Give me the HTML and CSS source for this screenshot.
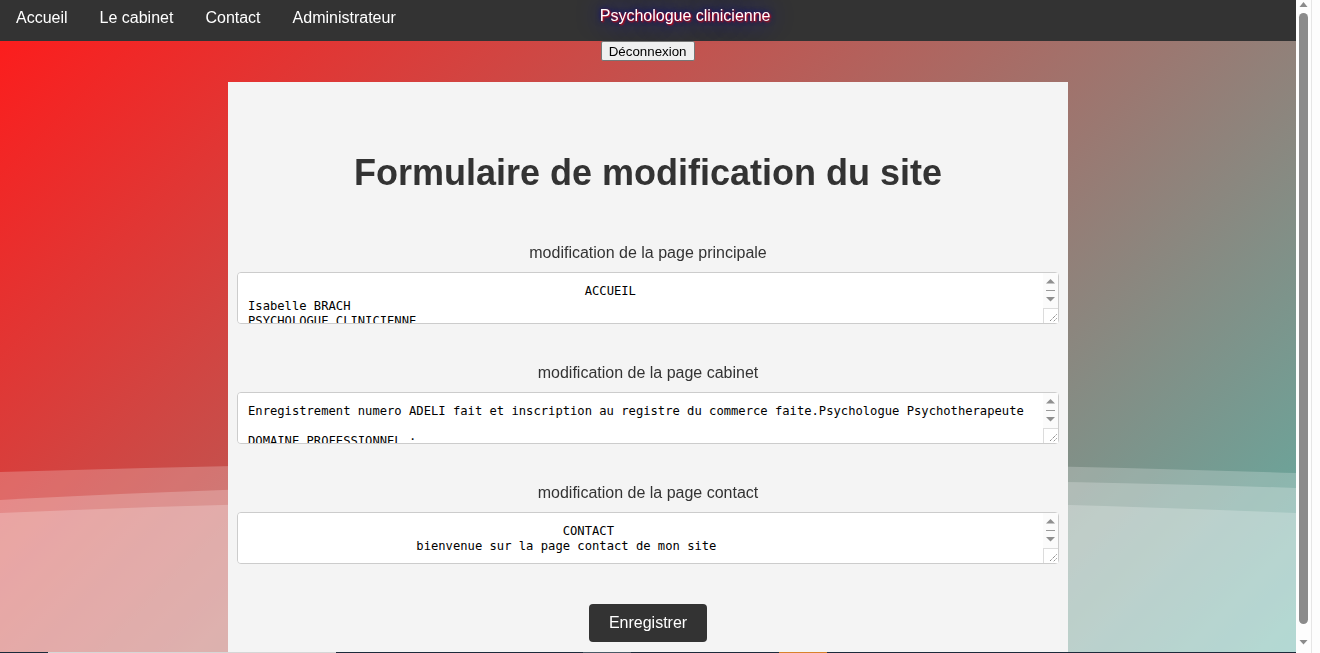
FILE: index.html
```html
<!DOCTYPE html>
<html lang="fr">
<head>
<meta charset="utf-8">
<title>Formulaire de modification du site</title>
<link rel="stylesheet" href="styles.css">
</head>
<body>
<div class="backdrop">
  <svg class="waves" viewBox="0 0 1296 653" preserveAspectRatio="none">
    <path d="M0,472 Q648,451 1296,473 L1296,653 L0,653 Z"/>
    <path d="M0,500 C400,478 900,474 1296,488 L1296,653 L0,653 Z"/>
    <path d="M0,513 Q648,485 1296,513 L1296,653 L0,653 Z"/>
  </svg>
</div>
<header class="topnav">
  <nav class="links">
    <a href="#">Accueil</a>
    <a href="#">Le cabinet</a>
    <a href="#">Contact</a>
    <a href="#">Administrateur</a>
  </nav>
  <div class="brand">
    <span class="brand-title">Psychologue clinicienne</span>
    <button class="logout" type="button">Déconnexion</button>
  </div>
</header>
<main class="card">
  <h1 class="title">Formulaire de modification du site</h1>
  <form class="edit-form">
    <div class="field">
      <label class="field-label">modification de la page principale</label>
      <div class="input-wrap">
        <textarea class="field-input">                                              ACCUEIL
Isabelle BRACH
PSYCHOLOGUE CLINICIENNE
PSYCHOTHERAPEUTE

Consultations sur rendez-vous
Adultes, adolescents, enfants</textarea>
        <svg class="ta-scroll" width="15" height="35" viewBox="0 0 15 35" aria-hidden="true">
          <rect width="15" height="35" fill="#fbfbfb"/>
          <path d="M3 10.5 L7.5 6 L12 10.5 Z" fill="#8f8f8f"/>
          <rect x="3" y="17" width="9" height="1" fill="#9a9a9a"/>
          <path d="M3 24 L12 24 L7.5 28.5 Z" fill="#8f8f8f"/>
        </svg>
      </div>
    </div>
    <div class="field">
      <label class="field-label">modification de la page cabinet</label>
      <div class="input-wrap">
        <textarea class="field-input">Enregistrement numero ADELI fait et inscription au registre du commerce faite.Psychologue Psychotherapeute

DOMAINE PROFESSIONNEL :
Psychologie clinique
Psychotherapie</textarea>
        <svg class="ta-scroll" width="15" height="35" viewBox="0 0 15 35" aria-hidden="true">
          <rect width="15" height="35" fill="#fbfbfb"/>
          <path d="M3 10.5 L7.5 6 L12 10.5 Z" fill="#8f8f8f"/>
          <rect x="3" y="17" width="9" height="1" fill="#9a9a9a"/>
          <path d="M3 24 L12 24 L7.5 28.5 Z" fill="#8f8f8f"/>
        </svg>
      </div>
    </div>
    <div class="field">
      <label class="field-label">modification de la page contact</label>
      <div class="input-wrap">
        <textarea class="field-input">                                           CONTACT
                       bienvenue sur la page contact de mon site


</textarea>
        <svg class="ta-scroll" width="15" height="35" viewBox="0 0 15 35" aria-hidden="true">
          <rect width="15" height="35" fill="#fbfbfb"/>
          <path d="M3 10.5 L7.5 6 L12 10.5 Z" fill="#8f8f8f"/>
          <rect x="3" y="17" width="9" height="1" fill="#9a9a9a"/>
          <path d="M3 24 L12 24 L7.5 28.5 Z" fill="#8f8f8f"/>
        </svg>
      </div>
    </div>
    <div class="actions">
      <button class="save" type="button">Enregistrer</button>
    </div>
  </form>
</main>
<footer class="footer">
  <span class="f-a"></span>
  <span class="f-light"></span>
  <span class="f-b"></span>
  <span class="f-slate"></span>
  <span class="f-c"></span>
  <span class="f-orange"></span>
  <span class="f-d"></span>
</footer>
<div class="vscroll" aria-hidden="true">
  <svg class="vs-btn" width="24" height="13" viewBox="0 0 24 13">
    <path d="M7.5 2 L11.5 7 L3.5 7 Z" fill="#8b8b8b"/>
  </svg>
  <div class="vs-thumb"></div>
  <div class="vs-space"></div>
  <svg class="vs-btn" width="24" height="17" viewBox="0 0 24 17">
    <path d="M3.5 4 L11.5 4 L7.5 8.5 Z" fill="#8b8b8b"/>
  </svg>
</div>
</body>
</html>
```
FILE: styles.css
```css
body {
  margin: 0;
  font-family: "Liberation Sans", Arial, sans-serif;
  color: #333;
}

.backdrop {
  position: fixed;
  top: 0;
  left: 0;
  bottom: 0;
  right: 24px;
  z-index: -1;
  background: linear-gradient(135deg, #ff1a1a 0%, #5fb0a5 100%);
}
.waves {
  display: block;
  width: 100%;
  height: 100%;
}
.waves path {
  fill: rgba(255, 255, 255, 0.22);
}

/* fake page scrollbar (the window's own one) */
.vscroll {
  position: fixed;
  top: 0;
  right: 0;
  bottom: 0;
  width: 24px;
  display: flex;
  flex-direction: column;
  background: linear-gradient(to right, #fdfdfd 15px, #e6e6e6 15px 16px, #fdfdfd 16px);
}
.vs-btn {
  display: block;
  flex: none;
}
.vs-thumb {
  flex: none;
  width: 9px;
  height: 611px;
  margin-left: 3px;
  border-radius: 4.5px;
  background: #8b8b8b;
}
.vs-space {
  flex: 1;
}

.topnav {
  display: flex;
  align-items: flex-start;
  height: 41px;
  background: #333;
}
.links {
  display: flex;
}
.links a {
  display: block;
  padding: 9px 16px 7px;
  font-size: 16px;
  line-height: 18px;
  color: #fff;
  text-decoration: none;
}
.brand {
  display: flex;
  flex-direction: column;
  align-items: flex-start;
  margin-left: 188px;
  padding-top: 7px;
}
.brand-title {
  font-size: 16px;
  line-height: 18px;
  color: #fff;
  text-shadow: 1px 1px 2px red, 0 0 25px blue, 0 0 5px darkblue;
}
.logout {
  margin: 16px 0 0 1px;
  height: 20px;
  padding: 0 7px;
  font-family: "Liberation Sans", Arial, sans-serif;
  font-size: 13.33px;
  color: #000;
  background: #efefef;
  border: 1px solid #767676;
  border-radius: 2px;
}
.card {
  box-sizing: border-box;
  width: 840px;
  margin: 41px 0 0 228px;
  padding: 70px 9px 10px;
  background: #f4f4f4;
}
.title {
  margin: 0 0 51px;
  font-size: 36px;
  line-height: 41px;
  font-weight: bold;
  text-align: center;
  color: #333;
}
.edit-form {
  display: flex;
  flex-direction: column;
  gap: 40px;
}
.field {
  display: flex;
  flex-direction: column;
  gap: 10px;
}
.field-label {
  font-size: 16px;
  line-height: 18px;
  text-align: center;
  color: #333;
}
.input-wrap {
  position: relative;
}
.field-input {
  display: block;
  box-sizing: border-box;
  width: 100%;
  height: 52px;
  margin: 0;
  padding: 11px 25px 9px 10px;
  border: 1px solid #ccc;
  border-radius: 4px;
  background: #fff;
  font-family: "DejaVu Sans Mono", "Liberation Mono", monospace;
  font-size: 12.17px;
  line-height: 15px;
  color: #000;
}
.field-input::-webkit-resizer {
  background: #fff url("data:image/svg+xml,%3Csvg xmlns='http://www.w3.org/2000/svg' width='15' height='15'%3E%3Crect x='0' y='0' width='15' height='1' fill='%23dcdcdc'/%3E%3Crect x='0' y='0' width='1' height='15' fill='%23dcdcdc'/%3E%3Cpath d='M13.5 6.5 L6.5 13.5 M13.5 10.5 L10.5 13.5' stroke='%23555' stroke-width='1' stroke-dasharray='1 1'/%3E%3C/svg%3E") no-repeat 0 0;
}
.ta-scroll {
  position: absolute;
  top: 1px;
  right: 1px;
  display: block;
}

.actions {
  display: flex;
  justify-content: center;
}
.save {
  height: 38px;
  padding: 0 20px;
  font-family: "Liberation Sans", Arial, sans-serif;
  font-size: 16px;
  color: #fff;
  background: #333;
  border: none;
  border-radius: 4px;
}
.footer {
  display: flex;
  height: 14px;
  background: #1c2a3a;
}
.footer span {
  display: block;
  height: 100%;
}
.f-a { width: 48px; }
.f-light { width: 288px; background: #d6d6d6; }
.f-b { width: 247px; }
.f-slate { width: 48px; background: #4a5a66; }
.f-c { width: 148px; }
.f-orange { width: 48px; background: #d9822b; }
.f-d { flex: 1; }
```
